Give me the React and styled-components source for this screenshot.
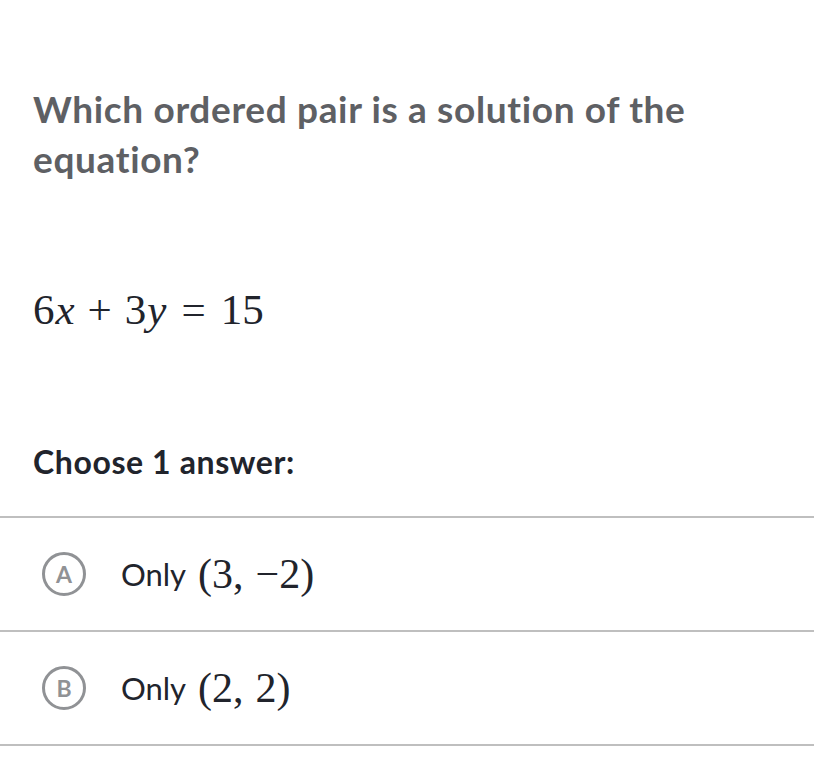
import React from "react";
import styled, { createGlobalStyle } from "styled-components";

const Global = createGlobalStyle`
  html, body { margin: 0; padding: 0; background: #ffffff; }
  body { font-family: Lato, "Noto Sans", sans-serif; }
`;

const Page = styled.div`
  width: 814px;
  height: 776px;
  background: #fff;
  overflow: hidden;
`;

const Content = styled.div`
  padding: 84px 33px 0 33px;
`;

const Title = styled.h1`
  margin: 0;
  max-width: 720px;
  font-family: Lato, sans-serif;
  font-weight: 700;
  font-size: 37px;
  line-height: 50px;
  color: #5e6064;
  letter-spacing: 0.65px;
`;

const Equation = styled.div`
  margin-top: 98px;
  font-family: "Liberation Serif", "DejaVu Serif", serif;
  font-size: 43px;
  line-height: 56px;
  color: #21242c;
  white-space: nowrap;
`;

const Var = styled.i`
  font-style: italic;
  margin-left: 1px;
`;

const Op = styled.span`
  margin: 0 ${(p) => p.$gap}px;
`;

const Choose = styled.div`
  margin-top: 102px;
  font-family: Lato, sans-serif;
  font-weight: 700;
  font-size: 32px;
  line-height: 44px;
  color: #21242c;
  letter-spacing: 0.6px;
`;

const List = styled.ul`
  list-style: none;
  margin: 32px 0 0 0;
  padding: 0;
  border-top: 2px solid #bfbfbf;
`;

const Option = styled.li`
  display: flex;
  align-items: center;
  height: 112px;
  padding-left: 42px;
  border-bottom: 2px solid #bfbfbf;
`;

const Letter = styled.span`
  box-sizing: border-box;
  width: 44px;
  height: 44px;
  border-radius: 50%;
  border: 3px solid #909295;
  display: flex;
  align-items: center;
  justify-content: center;
  font-family: Lato, sans-serif;
  font-weight: 700;
  font-size: 23px;
  line-height: 1;
  color: #909295;
  margin-right: 35px;
`;

const Label = styled.span`
  font-family: Lato, sans-serif;
  font-weight: 400;
  font-size: 31px;
  color: #21242c;
`;

const MathText = styled.span`
  font-family: "Liberation Serif", "DejaVu Serif", serif;
  font-size: 42px;
  color: #21242c;
  margin-left: 12px;
  white-space: nowrap;
`;

const Comma = styled.span`
  margin-right: 12px;
`;

const options = [
  { letter: "A", a: "3", b: "\u22122" },
  { letter: "B", a: "2", b: "2" },
];

export default function App() {
  return (
    <Page>
      <Global />
      <Content>
        <Title>Which ordered pair is a solution of the equation?</Title>
        <Equation>
          6<Var>x</Var>
          <Op $gap={13}>+</Op>3<Var>y</Var>
          <Op $gap={15}>=</Op>15
        </Equation>
        <Choose>Choose 1 answer:</Choose>
      </Content>
      <List>
        {options.map((o) => (
          <Option key={o.letter}>
            <Letter>{o.letter}</Letter>
            <Label>Only</Label>
            <MathText>
              ({o.a}
              <Comma>,</Comma>
              {o.b})
            </MathText>
          </Option>
        ))}
      </List>
    </Page>
  );
}
